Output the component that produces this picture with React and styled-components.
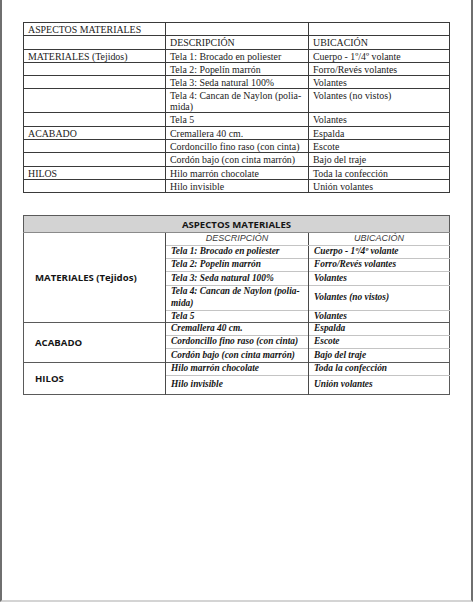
import React from 'react';
import styled, { createGlobalStyle } from 'styled-components';

const GlobalStyle = createGlobalStyle`
  html, body {
    margin: 0;
    padding: 0;
    background: #fff;
  }
`;

const plainRows = [
  { a: 'ASPECTOS MATERIALES', b: '', c: '' },
  { a: '', b: 'DESCRIPCIÓN', c: 'UBICACIÓN' },
  { a: 'MATERIALES (Tejidos)', b: 'Tela 1: Brocado en poliester', c: 'Cuerpo - 1º/4º volante' },
  { a: '', b: 'Tela 2: Popelín marrón', c: 'Forro/Revés volantes' },
  { a: '', b: 'Tela 3: Seda natural 100%', c: 'Volantes' },
  { a: '', b: ['Tela 4: Cancan de Naylon (polia-', 'mida)'], c: 'Volantes (no vistos)', h: 22.7 },
  { a: '', b: 'Tela 5', c: 'Volantes' },
  { a: 'ACABADO', b: 'Cremallera 40 cm.', c: 'Espalda' },
  { a: '', b: 'Cordoncillo fino raso (con cinta)', c: 'Escote' },
  { a: '', b: 'Cordón bajo (con cinta marrón)', c: 'Bajo del traje' },
  { a: 'HILOS', b: 'Hilo marrón chocolate', c: 'Toda la confección' },
  { a: '', b: 'Hilo invisible', c: 'Unión volantes' },
];

const groups = [
  {
    label: 'MATERIALES (Tejidos)',
    rows: [
      { d: 'Tela 1: Brocado en poliester', u: 'Cuerpo - 1º/4º volante', h: 13.4 },
      { d: 'Tela 2: Popelín marrón', u: 'Forro/Revés volantes', h: 13.3 },
      { d: 'Tela 3: Seda natural 100%', u: 'Volantes', h: 13.3 },
      { d: ['Tela 4: Cancan de Naylon (polia-', 'mida)'], u: 'Volantes (no vistos)', h: 25 },
      { d: 'Tela 5', u: 'Volantes', h: 12.4 },
    ],
  },
  {
    label: 'ACABADO',
    rows: [
      { d: 'Cremallera 40 cm.', u: 'Espalda', h: 13.3 },
      { d: 'Cordoncillo fino raso (con cinta)', u: 'Escote', h: 12.7 },
      { d: 'Cordón bajo (con cinta marrón)', u: 'Bajo del traje', h: 14 },
    ],
  },
  {
    label: 'HILOS',
    rows: [
      { d: 'Hilo marrón chocolate', u: 'Toda la confección', h: 12.6 },
      { d: 'Hilo invisible', u: 'Unión volantes', h: 19.4 },
    ],
  },
];

function Lines({ text }) {
  if (!Array.isArray(text)) return text;
  return text.map((t, i) => (
    <React.Fragment key={i}>
      {i > 0 && <br />}
      {t}
    </React.Fragment>
  ));
}

export default function App() {
  return (
    <>
      <GlobalStyle />
      <Page>
        <PlainTable>
          <colgroup>
            <col style={{ width: 142 }} />
            <col style={{ width: 143 }} />
            <col style={{ width: 141 }} />
          </colgroup>
          <tbody>
            {plainRows.map((r, i) => (
              <PlainRow key={i} $h={r.h || 13.3}>
                <PlainCell>{r.a}</PlainCell>
                <PlainCell><Lines text={r.b} /></PlainCell>
                <PlainCell>{r.c}</PlainCell>
              </PlainRow>
            ))}
          </tbody>
        </PlainTable>

        <StyledTable>
          <colgroup>
            <col style={{ width: 142 }} />
            <col style={{ width: 143 }} />
            <col style={{ width: 141 }} />
          </colgroup>
          <tbody>
            <HeadRow>
              <HeadCell colSpan={3}>ASPECTOS MATERIALES</HeadCell>
            </HeadRow>
            {groups.map((g, gi) => (
              <React.Fragment key={g.label}>
                {gi === 0 && (
                  <SubRow>
                    <GroupCell rowSpan={g.rows.length + 1}>{g.label}</GroupCell>
                    <SubCell>DESCRIPCIÓN</SubCell>
                    <SubCell $last>UBICACIÓN</SubCell>
                  </SubRow>
                )}
                {g.rows.map((r, ri) => (
                  <BodyRow key={ri} $h={r.h}>
                    {gi > 0 && ri === 0 && (
                      <GroupCell rowSpan={g.rows.length}>{g.label}</GroupCell>
                    )}
                    <BodyCell $groupStart={gi > 0 && ri === 0}>
                      <Lines text={r.d} />
                    </BodyCell>
                    <BodyCell $groupStart={gi > 0 && ri === 0} $last>
                      {r.u}
                    </BodyCell>
                  </BodyRow>
                ))}
              </React.Fragment>
            ))}
          </tbody>
        </StyledTable>
      </Page>
    </>
  );
}

const Page = styled.div`
  box-sizing: border-box;
  width: 473px;
  height: 602px;
  border-left: 2px solid #6f6f6f;
  border-right: 2px solid #6f6f6f;
  border-bottom: 2px solid #d4d4d4;
  padding: 22px 0 0 21px;
  display: flex;
  flex-direction: column;
  gap: 22px;
  overflow: hidden;
`;

const PlainTable = styled.table`
  border-collapse: collapse;
  table-layout: fixed;
  width: 426px;
  font-family: "Liberation Serif", "DejaVu Serif", serif;
  font-size: 9.9px;
  color: #1b1b1b;
`;

const PlainRow = styled.tr`
  height: ${(p) => p.$h}px;
`;

const PlainCell = styled.td`
  border: 1px solid #3a3a3a;
  padding: 0 4px;
  line-height: 11px;
  vertical-align: top;
  padding-top: 1px;
  white-space: nowrap;
  overflow: hidden;
`;

const StyledTable = styled.table`
  border-collapse: collapse;
  table-layout: fixed;
  width: 426px;
  border: 1px solid #5a5a5a;
  color: #151515;
`;

const HeadRow = styled.tr`
  height: 17px;
  background: #d3d3d3;
`;

const HeadCell = styled.td`
  border-bottom: 1px solid #8a8a8a;
  text-align: center;
  font-family: "Open Sans", "Liberation Sans", sans-serif;
  font-weight: 700;
  font-size: 9.6px;
  line-height: 12px;
  padding: 1px 0 0;
`;

const SubRow = styled.tr`
  height: 12.3px;
`;

const SubCell = styled.td`
  border-left: ${(p) => (p.$last ? '1px solid #4a4a4a' : 'none')};
  border-bottom: 1px solid #c4c4c4;
  text-align: center;
  font-family: "Liberation Sans", "Arimo", sans-serif;
  font-style: italic;
  font-size: 9px;
  line-height: 11px;
  color: #3a3a3a;
  padding: 0;
`;

const GroupCell = styled.td`
  border-top: 1px solid #5a5a5a;
  border-right: 1px solid #4a4a4a;
  vertical-align: middle;
  padding: 0 0 0 11px;
  font-family: "Open Sans", "Liberation Sans", sans-serif;
  font-weight: 700;
  font-size: 9.6px;
  line-height: 12px;
  white-space: nowrap;
`;

const BodyRow = styled.tr`
  height: ${(p) => p.$h}px;
`;

const BodyCell = styled.td`
  border-top: 1px solid ${(p) => (p.$groupStart ? '#5a5a5a' : '#c4c4c4')};
  border-left: ${(p) => (p.$last ? '1px solid #4a4a4a' : 'none')};
  padding: 0 4px 0 5px;
  vertical-align: middle;
  font-family: "Liberation Serif", "DejaVu Serif", serif;
  font-style: italic;
  font-weight: 700;
  font-size: 9.4px;
  line-height: 11.5px;
  white-space: nowrap;
  overflow: hidden;
`;
